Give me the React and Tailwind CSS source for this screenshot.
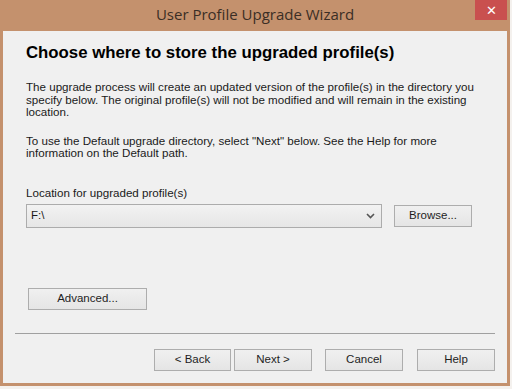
import React from "react";

const Btn = ({ children, className = "" }) => (
  <button
    className={`h-[22px] border border-[#adadad] bg-gradient-to-b from-[#f0f0f0] to-[#e5e5e5] text-[11.5px] text-[#1e1e1e] ${className}`}
  >
    {children}
  </button>
);

export default function App() {
  return (
    <div className="w-[512px] h-[389px] bg-[#f4f1ee] font-['Liberation_Sans',sans-serif]">
      <div className="w-[510px] h-[386px] bg-[#c4916d] flex flex-col px-[3px] pb-[3px]">
        {/* title bar */}
        <div className="relative h-[31px] flex items-center justify-center">
          <span className="font-['Open_Sans',sans-serif] text-[15px] text-[#3b2e25] -mt-[2px]">
            User Profile Upgrade Wizard
          </span>
          <div className="absolute right-[0px] top-0 w-[32px] h-[20px] bg-[#c9504f] flex items-center justify-center text-white text-[13px] leading-none">
            ✕
          </div>
        </div>

        {/* body */}
        <div className="flex-1 bg-[#f0f0f0] flex flex-col">
          <div className="px-[23px] text-[#1a1a1a]">
            <h1 className="mt-[12px] text-[16.8px] font-bold leading-[20px] text-black">
              Choose where to store the upgraded profile(s)
            </h1>
            <p className="mt-[18px] text-[11.6px] leading-[12.5px]">
              The upgrade process will create an updated version of the profile(s) in the directory you
              specify below. The original profile(s) will not be modified and will remain in the existing
              location.
            </p>
            <p className="mt-[16px] text-[11.6px] leading-[12.5px]">
              To use the Default upgrade directory, select "Next" below. See the Help for more
              information on the Default path.
            </p>
            <div className="mt-[27px] text-[11.6px] leading-[12px]">Location for upgraded profile(s)</div>
            <div className="mt-[5px] flex items-center gap-[12px]">
              <div className="w-[356px] h-[24px] border border-[#acacac] bg-gradient-to-b from-[#f2f2f2] to-[#e6e6e6] flex items-center justify-between pl-[4px] pr-[6px] text-[11.5px]">
                <span>F:\</span>
                <svg width="9" height="6" viewBox="0 0 9 6">
                  <path d="M1 1l3.5 3.5L8 1" fill="none" stroke="#555" strokeWidth="1.6" />
                </svg>
              </div>
              <Btn className="w-[78px]">Browse...</Btn>
            </div>
            <Btn className="mt-[60px] ml-[2px] w-[119px]">Advanced...</Btn>
          </div>

          <div className="flex-1" />
          <div className="mx-[12px] h-[2px] border-t border-[#a0a0a0] border-b-white" />
          <div className="mt-[14px] mb-[12px] mr-[12px] flex justify-end">
            <Btn className="w-[77px]">&lt; Back</Btn>
            <Btn className="ml-[3px] w-[78px] border-[#3c7fb1]">Next &gt;</Btn>
            <Btn className="ml-[13px] w-[78px]">Cancel</Btn>
            <Btn className="ml-[14px] w-[78px]">Help</Btn>
          </div>
        </div>
      </div>
    </div>
  );
}
